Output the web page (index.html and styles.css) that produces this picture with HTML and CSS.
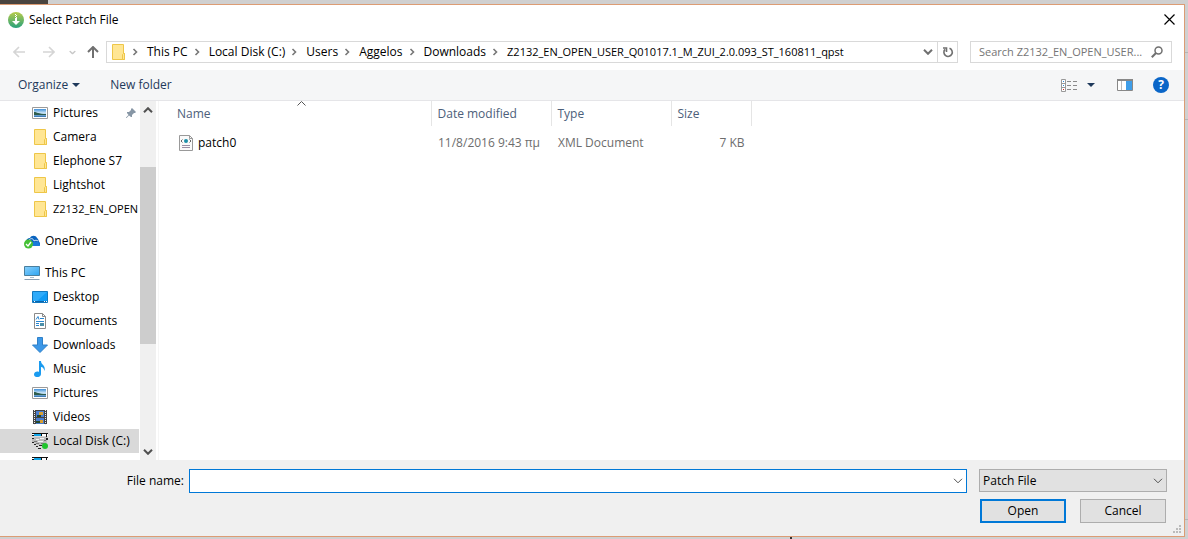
FILE: index.html
```html
<!DOCTYPE html>
<html lang="en">
<head>
    <meta charset="UTF-8">
    <meta name="viewport" content="width=device-width, initial-scale=1.0">
    <title>Select Patch File</title>
    <link rel="stylesheet" href="styles.css">
</head>
<body>
    <!-- Shared icons -->
    <svg class="sprite" width="0" height="0" aria-hidden="true">
        <defs>
            <linearGradient id="sky" x1="0" y1="0" x2="0" y2="1">
                <stop offset="0" stop-color="#3f8fd8"/>
                <stop offset="0.5" stop-color="#cfe8f8"/>
                <stop offset="1" stop-color="#2a6fb0"/>
            </linearGradient>
            <linearGradient id="screen" x1="0" y1="0" x2="1" y2="1">
                <stop offset="0" stop-color="#8ad0fb"/>
                <stop offset="1" stop-color="#2ba4f2"/>
            </linearGradient>
            <linearGradient id="app" x1="0" y1="0" x2="0" y2="1">
                <stop offset="0" stop-color="#b9cc4a"/>
                <stop offset="1" stop-color="#26a17c"/>
            </linearGradient>
        </defs>
        <symbol id="i-folder" viewBox="0 0 16 16">
            <path d="M2.500.5h11v9h1v6h-12z" fill="#ffe694" stroke="#eec648"/>
            <path d="M12.500 15.500v-5l1-1h1v6z" fill="#ffe694" stroke="#eec648"/>
        </symbol>
        <symbol id="i-pictures" viewBox="0 0 16 16">
            <path d="M.5 2.500h15v11H.5z" fill="#fff" stroke="#9a9a9a"/>
            <path d="M2 4h12v8H2z" fill="url(#sky)"/>
            <path d="M2 7c3 0 4 2 12 2v1H2z" fill="#2d5c4c"/>
        </symbol>
        <symbol id="i-drive" viewBox="0 0 16 16">
            <path d="M0 0h16v3H0z" fill="#fff"/>
            <path d="M2 1h7v2H2z" fill="#12a5e8"/>
            <path d="M0 0h16v1H0zM0 2h2v1H0zM9 1h1v2H9zM14 1h1v3h-1z" fill="#111"/>
            <path d="M3 4h12v5l-2 3H6L0 9V6z" fill="#bcbcbc"/>
            <path d="M4 6h3v1H4zM8 5h4v1H8zM6 8h5v1H6z" fill="#f4f4f4"/>
            <path d="M0 5h2v1H0zM14 5h2v2h-2zM0 9h2v1H0zM2 11h2v1H2zM4 13h2v1H4zM7 12h3v1H7zM6 15h3v1H6z" fill="#222"/>
            <path d="M2 8h3v1H2zM9 10h3v1H9zM4 10h3v1H4zM12 7h2v1h-2z" fill="#777"/>
            <circle cx="13" cy="13" r="3" fill="#1fc42c"/>
        </symbol>
        <symbol id="i-chevron-right" viewBox="0 0 6 8">
            <path d="M1.500 1l3 3-3 3" fill="none" stroke="#777" stroke-width="1.600"/>
        </symbol>
        <symbol id="i-chevron-down" viewBox="0 0 10 6">
            <path d="M1 .8l4 4 4-4" fill="none" stroke="currentColor"/>
        </symbol>
    </svg>

    <div class="dialog">
        <header class="titlebar">
            <svg class="icon" viewBox="0 0 16 16">
                <circle cx="8" cy="8" r="8" fill="url(#app)"/>
                <path d="M7 2h1v1H7zM8 3h1v1H8zM7 4h1v1H7zM8 5h1v1H8zM7 6h2v3h3l-4 4-4-4h3z" fill="#fff"/>
            </svg>
            <h1>Select Patch File</h1>
            <button class="plain close" aria-label="Close">
                <svg width="11" height="11" viewBox="0 0 11 11"><path d="M.5.5l10 10M10.500.5l-10 10" stroke="#000" stroke-width="1.200"/></svg>
            </button>
        </header>

        <nav class="navbar">
            <div class="history">
                <button class="plain" aria-label="Back"><svg width="12" height="12" viewBox="0 0 12 12"><path d="M12 6H1M6 1L1 6l5 5" fill="none" stroke="#d5d5d5" stroke-width="1.600"/></svg></button>
                <button class="plain" aria-label="Forward"><svg width="12" height="12" viewBox="0 0 12 12"><path d="M0 6h11M6 1l5 5-5 5" fill="none" stroke="#d5d5d5" stroke-width="1.600"/></svg></button>
                <button class="plain recent" aria-label="Recent locations"><svg width="7" height="5" viewBox="0 0 10 6"><use href="#i-chevron-down"/></svg></button>
                <button class="plain" aria-label="Up"><svg width="12" height="12" viewBox="0 0 12 12"><path d="M6 12V1M1 6l5-5 5 5" fill="none" stroke="#707070" stroke-width="2"/></svg></button>
            </div>
            <div class="address">
                <svg class="icon"><use href="#i-folder"/></svg>
                <ol class="crumbs">
                    <li><svg class="sep"><use href="#i-chevron-right"/></svg><a href="#">This PC</a></li>
                    <li><svg class="sep"><use href="#i-chevron-right"/></svg><a href="#">Local Disk (C:)</a></li>
                    <li><svg class="sep"><use href="#i-chevron-right"/></svg><a href="#">Users</a></li>
                    <li><svg class="sep"><use href="#i-chevron-right"/></svg><a href="#">Aggelos</a></li>
                    <li><svg class="sep"><use href="#i-chevron-right"/></svg><a href="#">Downloads</a></li>
                    <li><svg class="sep"><use href="#i-chevron-right"/></svg><a href="#" class="long-name">Z2132_EN_OPEN_USER_Q01017.1_M_ZUI_2.0.093_ST_160811_qpst</a></li>
                </ol>
                <button class="plain drop" aria-label="Previous locations"><svg width="10" height="6"><use href="#i-chevron-down"/></svg></button>
                <button class="plain refresh" aria-label="Refresh">
                    <svg width="12" height="12" viewBox="0 0 12 12"><path d="M7.500 2.300A4.200 4.200 0 1 1 3 3.400M1 2h3.500v4" fill="none" stroke="#707070" stroke-width="1.600"/></svg>
                </button>
            </div>
            <div class="search">
                <input type="text" class="long-name" placeholder="Search Z2132_EN_OPEN_USER..." aria-label="Search">
                <svg width="12" height="12" viewBox="0 0 12 12"><circle cx="7.500" cy="4.500" r="3.500" fill="none" stroke="#707070" stroke-width="1.500"/><path d="M5 7L.8 11.200" stroke="#707070" stroke-width="2"/></svg>
            </div>
        </nav>

        <div class="toolbar">
            <button class="plain">Organize <svg width="8" height="4" viewBox="0 0 8 4"><path d="M0 0h8L4 4z" fill="#1e395b"/></svg></button>
            <button class="plain">New folder</button>
            <div class="view-tools">
                <button class="plain" aria-label="Change your view">
                    <svg width="17" height="13" viewBox="0 0 17 13">
                        <path d="M.5.5h4v12h-4zM.5 4.500h4M.5 8.500h4" fill="#fff" stroke="#999"/>
                        <path d="M2 2h1v1H2z" fill="#2a8ad8"/><path d="M2 6h1v1H2z" fill="#2a8ad8"/><path d="M2 10h1v1H2z" fill="#d22"/>
                        <path d="M6 2.500h4M12 2.500h4M6 6.500h4M12 6.500h4M6 10.500h4M12 10.500h4" stroke="#8a8a8a"/>
                    </svg>
                    <svg class="arrow" width="8" height="4" viewBox="0 0 8 4"><path d="M0 0h8L4 4z" fill="#1e395b"/></svg>
                </button>
                <button class="plain" aria-label="Preview pane">
                    <svg width="16" height="12" viewBox="0 0 16 12">
                        <path d="M.5.5h15v11H.5z" fill="#fff" stroke="#888"/><path d="M0 0h16v2H0z" fill="#888"/>
                        <path d="M4.500 2v9" stroke="#bbb"/><path d="M9 2h6v9H9z" fill="#3f9de8"/>
                    </svg>
                </button>
                <button class="plain help" aria-label="Help">?</button>
            </div>
        </div>

        <main>
            <aside class="sidebar">
                <ul class="tree">
                    <li><a href="#"><svg class="icon"><use href="#i-pictures"/></svg>Pictures
                        <svg class="pin" width="10" height="10" viewBox="0 0 10 10"><path d="M6 0l4 4-1 1H8L6 7v2H5L3 7.500.5 10H0v-.5L2.500 7 1 5V4h2l2-2V1z" fill="#8796a5"/></svg></a></li>
                    <li><a href="#"><svg class="icon"><use href="#i-folder"/></svg>Camera</a></li>
                    <li><a href="#"><svg class="icon"><use href="#i-folder"/></svg>Elephone S7</a></li>
                    <li><a href="#"><svg class="icon"><use href="#i-folder"/></svg>Lightshot</a></li>
                    <li><a href="#" class="long-name"><svg class="icon"><use href="#i-folder"/></svg>Z2132_EN_OPEN</a></li>
                    <li class="root"><a href="#">
                        <svg class="icon" viewBox="0 0 16 16">
                            <path d="M2 9c0-3 2-4 4-4 1-3 6-3 7 0 2 1 1 3 3 5v2H5z" fill="#0a64c0"/>
                            <path d="M7 13c0-4 3-5 5-4 3-1 4 2 4 4z" fill="#1a7ad8"/>
                            <path d="M5 7c2-2 4-2 5 1 1-1 3-1 4 0" fill="none" stroke="#fff" stroke-width=".8"/>
                            <circle cx="4.500" cy="11" r="4.500" fill="#45c035"/>
                            <path d="M2 11l2 2 3-4" fill="none" stroke="#fff" stroke-width="1.300"/>
                        </svg>OneDrive</a></li>
                    <li class="root"><a href="#">
                        <svg class="icon" viewBox="0 0 16 16">
                            <path d="M.5 1.500h15v9H.5z" fill="url(#screen)" stroke="#4a7f9e"/>
                            <path d="M6 12h4v1H6z" fill="#a9bccb"/><path d="M1 14h14l1 1H0z" fill="#8ba0b3"/>
                        </svg>This PC</a></li>
                    <li><a href="#">
                        <svg class="icon" viewBox="0 0 16 16">
                            <path d="M.5 2.500h15v11H.5z" fill="#109bf5" stroke="#1279c0"/>
                            <path d="M1 3h14L5 12H1z" fill="#2fabfa"/>
                            <path d="M1 12h14v1H1z" fill="#0b63a8"/><path d="M2 12h1v1H2zM12 12h1v1h-1zM14 12h1v1h-1z" fill="#fff"/>
                        </svg>Desktop</a></li>
                    <li><a href="#">
                        <svg class="icon" viewBox="0 0 16 16">
                            <path d="M2.500.5h8l3 3v12h-11z" fill="#fff" stroke="#8a8a8a"/><path d="M10.500.5v3h3" fill="none" stroke="#8a8a8a"/>
                            <path d="M4 6.500l2-3 1 3M8 5.500h4M4 8.500h8M4 10.500h3M4 12.500h3" fill="none" stroke="#2a86cf"/><path d="M8 10h4v3H8z" fill="#4b8fa8"/>
                        </svg>Documents</a></li>
                    <li><a href="#">
                        <svg class="icon" viewBox="0 0 16 16"><path d="M5.500.5h5V8h5L8 15.500.5 8h5z" fill="#3c98e8" stroke="#2f80c8"/></svg>Downloads</a></li>
                    <li><a href="#">
                        <svg class="icon" viewBox="0 0 16 16"><path d="M7 0h2c0 4 5 4 3.500 10C12 8 11 6 9 6v7c0 4-7 4-7 .5C2 11 5 10 7 11z" fill="#1a9bf0"/></svg>Music</a></li>
                    <li><a href="#"><svg class="icon"><use href="#i-pictures"/></svg>Pictures</a></li>
                    <li><a href="#">
                        <svg class="icon" viewBox="0 0 16 16">
                            <path d="M1 1h14v14H1z" fill="#444"/><path d="M4 2h8v6H4zM4 9h8v6H4z" fill="#4a7ed0"/>
                            <path d="M7 3h4v3H7zM8 11h3v3H8z" fill="#d9a032"/><path d="M5 6h4v2H5zM4 12h4v2H4z" fill="#274a2a"/>
                            <path d="M2.500 1v15M13.500 1v15" stroke="#eee" stroke-dasharray="1 1"/>
                        </svg>Videos</a></li>
                    <li><a href="#" class="selected"><svg class="icon"><use href="#i-drive"/></svg>Local Disk (C:)</a></li>
                    <li><a href="#" aria-label="Next drive"><svg class="icon"><use href="#i-drive"/></svg></a></li>
                </ul>
                <div class="scrollbar">
                    <button class="plain" aria-label="Scroll up"><svg class="flip" width="10" height="6"><use href="#i-chevron-down"/></svg></button>
                    <div class="track-before"></div>
                    <div class="thumb"></div>
                    <div class="track-after"></div>
                    <button class="plain" aria-label="Scroll down"><svg width="10" height="6"><use href="#i-chevron-down"/></svg></button>
                </div>
            </aside>

            <section class="files">
                <table>
                    <thead>
                        <tr>
                            <th class="col-name">Name<svg class="sort" width="9" height="5" viewBox="0 0 9 5"><path d="M.5 4.500l4-4 4 4" fill="none" stroke="#555"/></svg></th>
                            <th class="col-date">Date modified</th>
                            <th class="col-type">Type</th>
                            <th class="col-size">Size</th>
                        </tr>
                    </thead>
                    <tbody>
                        <tr>
                            <td class="name"><div class="file">
                                <svg class="icon" viewBox="0 0 16 16">
                                    <path d="M1.500.5h10l3 3v12h-13z" fill="#fafafa" stroke="#999"/><path d="M11.500.5v3h3" fill="none" stroke="#999"/>
                                    <path d="M4.500 4.500L3 6l1.500 1.500M11.500 4.500L13 6l-1.500 1.500" fill="none" stroke="#666"/>
                                    <circle cx="8" cy="6" r="2" fill="#1c8fa8"/><path d="M4 10.500h8M4 12.500h8" stroke="#9a8fa5"/>
                                </svg>patch0</div></td>
                            <td>11/8/2016 9:43 πμ</td>
                            <td>XML Document</td>
                            <td class="size">7 KB</td>
                        </tr>
                    </tbody>
                </table>
            </section>
        </main>

        <footer>
            <div class="row">
                <label for="filename">File name:</label>
                <div class="combo">
                    <input type="text" id="filename">
                    <button class="plain" aria-label="Show recent names"><svg width="10" height="6"><use href="#i-chevron-down"/></svg></button>
                </div>
                <div class="filter">
                    <select aria-label="File type"><option>Patch File</option></select>
                    <svg width="10" height="6"><use href="#i-chevron-down"/></svg>
                </div>
            </div>
            <div class="row actions">
                <button class="btn primary">Open</button>
                <button class="btn">Cancel</button>
            </div>
            <svg class="grip" width="8" height="8" viewBox="0 0 8 8"><path d="M6 0h2v2H6zM3 3h2v2H3zM6 3h2v2H6zM0 6h2v2H0zM3 6h2v2H3zM6 6h2v2H6z" fill="#bbb"/></svg>
        </footer>
    </div>
</body>
</html>
```
FILE: styles.css
```css
/* General */
* {
    box-sizing: border-box;
}
body {
    font-family: "Open Sans", "Noto Sans", sans-serif;
    font-size: 12px;
    line-height: 16px;
    margin: 0;
    padding: 4px 3px 2px 0;
    height: 100vh;
    color: #000;
    background:
        linear-gradient(#4a443f, #4a443f) 0 0 / 48px 4px no-repeat,
        linear-gradient(#333, #333) 790px 100% / 2px 2px no-repeat,
        linear-gradient(#b5b5b5, #b5b5b5) 100% 52px / 4px 1px no-repeat,
        linear-gradient(#b5b5b5, #b5b5b5) 100% 119px / 4px 1px no-repeat,
        linear-gradient(#b5b5b5, #b5b5b5) 100% 519px / 4px 1px no-repeat,
        #d0d0d0;
}
svg {
    display: block;
    flex: none;
    stroke-width: 1px;
}
.sprite {
    position: absolute;
}
.icon {
    width: 16px;
    height: 16px;
}
button, input, select {
    font: inherit;
    color: inherit;
    margin: 0;
}
a {
    color: inherit;
    text-decoration: none;
}
ul, ol {
    list-style: none;
    margin: 0;
    padding: 0;
}
.plain {
    display: flex;
    align-items: center;
    justify-content: center;
    background: none;
    border: none;
    padding: 0;
}
.long-name {
    font-size: 11px;
}
.dialog {
    display: flex;
    flex-direction: column;
    height: 100%;
    background-color: #fff;
    border: 1px solid #dc9c74;
    border-left: none;
}

/* Title and address */
.titlebar {
    display: flex;
    align-items: center;
    gap: 5px;
    height: 29px;
    padding: 0 9px 0 8px;
}
.titlebar h1 {
    margin: 0;
    font-size: 12px;
    font-weight: normal;
}
.close {
    margin-left: auto;
}
.navbar {
    display: flex;
    align-items: center;
    height: 36px;
    padding: 0 12px 0 13px;
}
.history {
    display: flex;
    align-items: center;
    gap: 18px;
    width: 93px;
}
.recent {
    color: #c8c8c8;
    margin: 0 -7px 0 -4px;
}
.recent svg, .drop svg {
    stroke-width: 2px;
}
.address {
    display: flex;
    align-items: center;
    flex: 1;
    height: 22px;
    padding-left: 3px;
    border: 1px solid #d9d9d9;
}
.crumbs {
    display: flex;
    flex: 1;
}
.crumbs li {
    display: flex;
    align-items: center;
    white-space: nowrap;
}
.sep {
    width: 6px;
    height: 8px;
    margin: 0 9px 0 6px;
}
.drop {
    width: 18px;
    color: #707070;
}
.refresh {
    width: 20px;
    height: 20px;
    border-left: 1px solid #d9d9d9;
}
.search {
    display: flex;
    align-items: center;
    width: 202px;
    height: 22px;
    margin-left: 12px;
    padding: 0 8px;
    border: 1px solid #d9d9d9;
}
.search input {
    flex: 1;
    min-width: 0;
    border: none;
    padding: 0;
    outline: none;
}
.search input::placeholder {
    color: #757575;
}

/* Toolbar */
.toolbar {
    display: flex;
    align-items: center;
    gap: 30px;
    height: 31px;
    padding: 0 15px 0 18px;
    background-color: #f5f6f7;
    border-bottom: 1px solid #e5e5e8;
    color: #1e395b;
}
.toolbar button {
    gap: 4px;
}
.view-tools {
    display: flex;
    align-items: center;
    gap: 20px;
    margin-left: auto;
}
.view-tools .arrow {
    margin: 0 2px 0 5px;
}
.toolbar .help {
    width: 16px;
    height: 16px;
    border-radius: 50%;
    background-color: #0a66c8;
    color: #fff;
    font-weight: bold;
}

/* Folder tree */
main {
    display: flex;
    flex: 1;
    min-height: 0;
}
.sidebar {
    display: flex;
    width: 159px;
    border-right: 1px solid #f5f5f5;
}
.tree {
    width: 139px;
    overflow: hidden;
}
.tree a {
    display: flex;
    align-items: center;
    gap: 5px;
    height: 24px;
    padding-left: 32px;
    white-space: nowrap;
}
.tree .root {
    margin: 8px 0;
}
.tree .root + .root {
    margin-bottom: 0;
}
.tree .root a {
    padding-left: 24px;
}
.tree .selected {
    background-color: #d9d9d9;
}
.pin {
    margin: 0 3px 0 auto;
}
.scrollbar {
    display: flex;
    flex-direction: column;
    width: 16px;
    margin-left: 1px;
    background-color: #f0f0f0;
    color: #505050;
}
.scrollbar button {
    height: 17px;
}
.scrollbar svg {
    stroke-width: 2px;
}
.track-before {
    flex: 49;
}
.thumb {
    flex: 177;
    background-color: #cdcdcd;
}
.track-after {
    flex: 99;
}
.flip {
    transform: rotate(180deg);
}

/* File list */
.files {
    flex: 1;
}
.files table {
    table-layout: fixed;
    width: 593px;
    border-collapse: collapse;
}
.files th {
    position: relative;
    height: 25px;
    padding: 0 6px;
    border-right: 1px solid #e5e5e5;
    color: #4c607a;
    font-weight: normal;
    text-align: left;
}
.files .col-name {
    width: 272px;
    padding-left: 18px;
}
.col-date, .col-type {
    width: 120px;
}
.sort {
    position: absolute;
    top: 0;
    left: 51%;
}
.files td {
    height: 34px;
    padding: 0 7px;
    color: #6d6d6d;
}
.files .name {
    padding-left: 19px;
    color: #000;
}
.file {
    display: flex;
    align-items: center;
    gap: 4px;
}
.files .size {
    text-align: right;
}

/* File name and buttons */
footer {
    position: relative;
    height: 76px;
    padding: 9px 17px 0 0;
    background-color: #f0f0f0;
}
.row {
    display: flex;
}
.row label {
    width: 184px;
    margin-right: 5px;
    line-height: 24px;
    text-align: right;
}
.combo {
    display: flex;
    flex: 1;
    height: 24px;
    background-color: #fff;
    border: 1px solid #0078d7;
}
.combo input {
    flex: 1;
    border: none;
    outline: none;
    background: none;
}
.combo button {
    width: 17px;
    color: #505050;
}
.filter {
    position: relative;
    width: 188px;
    height: 23px;
    margin-left: 12px;
    color: #505050;
}
.filter select {
    appearance: none;
    width: 100%;
    height: 100%;
    padding: 0 3px;
    border: 1px solid #adadad;
    border-radius: 0;
    background-color: #e1e1e1;
    color: #000;
}
.filter svg {
    position: absolute;
    top: 9px;
    right: 4px;
    pointer-events: none;
}
.actions {
    justify-content: flex-end;
    gap: 14px;
    margin-top: 6px;
    padding-right: 1px;
}
.btn {
    width: 86px;
    height: 24px;
    padding: 0;
    border: 1px solid #adadad;
    background-color: #e1e1e1;
}
.btn.primary {
    border: 2px solid #0078d7;
}
.grip {
    position: absolute;
    right: 3px;
    bottom: 3px;
}
```
